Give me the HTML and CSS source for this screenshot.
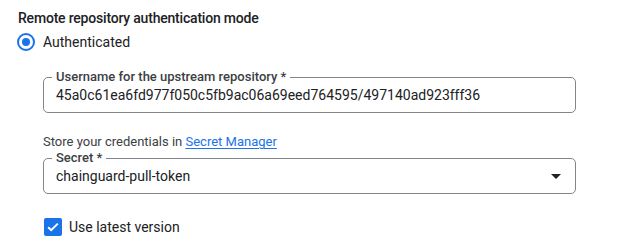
FILE: index.html
```html
<!DOCTYPE html>
<html lang="en">
<head>
  <meta charset="UTF-8">
  <meta name="viewport" content="width=device-width, initial-scale=1.0">
  <title>Remote repository authentication mode</title>
  <link rel="stylesheet" href="styles.css">
</head>
<body>
  <div class="panel">
    <div class="title">Remote repository authentication mode</div>

    <label class="radio-row">
      <span class="radio"><span class="radio-dot"></span></span>
      <span class="radio-label">Authenticated</span>
    </label>

    <div class="auth">
      <fieldset class="field">
        <legend>Username for the upstream repository *</legend>
        <div class="field-value">45a0c61ea6fd977f050c5fb9ac06a69eed764595/497140ad923fff36</div>
      </fieldset>

      <div class="hint">Store your credentials in <a href="#">Secret Manager</a></div>

      <fieldset class="field">
        <legend>Secret *</legend>
        <div class="field-value select">
          <span>chainguard-pull-token</span>
          <svg class="arrow" width="10" height="5" viewBox="0 0 10 5"><path d="M0 0h10L5 5z" fill="#202124"/></svg>
        </div>
      </fieldset>

      <label class="check-row">
        <span class="checkbox">
          <svg width="14" height="14" viewBox="0 0 14 14"><path d="M2.2 7.2l3 3 6.6-6.6" fill="none" stroke="#fff" stroke-width="2"/></svg>
        </span>
        <span class="check-label">Use latest version</span>
      </label>
    </div>
  </div>
</body>
</html>
```

FILE: styles.css
```css
body {
  margin: 0;
  font-family: Roboto, "Liberation Sans", sans-serif;
  color: #202124;
  background: #fff;
}
.panel {
  padding: 8px 42px 0 17px;
}
.title {
  font-size: 14px;
  line-height: 20px;
  font-weight: 500;
  letter-spacing: -0.2px;
  padding-left: 1px;
}
.radio-row {
  display: flex;
  align-items: center;
  height: 24px;
  margin-top: 2px;
}
.radio {
  width: 18px;
  height: 18px;
  box-sizing: border-box;
  border: 2px solid #1a73e8;
  border-radius: 50%;
  display: flex;
  align-items: center;
  justify-content: center;
}
.radio-dot {
  width: 8px;
  height: 8px;
  border-radius: 50%;
  background: #1a73e8;
}
.radio-label {
  font-size: 14px;
  margin-left: 8px;
}
.auth {
  margin-left: 26px;
}
.field {
  margin: 0;
  min-width: 0;
  border: 1px solid #80868b;
  border-radius: 5px;
  padding: 0 14px 7px 12px;
}
.field legend {
  font-size: 13px;
  line-height: 16px;
  font-weight: 500;
  color: #3c4043;
  padding: 0 4px;
  margin-left: -4px;
}
.field-value {
  font-size: 14px;
  line-height: 20px;
}
.select {
  display: flex;
  align-items: center;
  justify-content: space-between;
}
.auth > .field:first-child {
  margin-top: 15px;
}
.hint {
  font-size: 13px;
  line-height: 16px;
  margin-top: 21px;
  color: #3c4043;
}
.hint a {
  color: #1a73e8;
  text-decoration: underline;
  text-underline-offset: 2px;
}
.check-row {
  display: flex;
  align-items: center;
  height: 24px;
  margin-top: 21px;
}
.checkbox {
  width: 18px;
  height: 18px;
  margin-left: 1px;
  border-radius: 2px;
  background: #1a73e8;
  display: flex;
  align-items: center;
  justify-content: center;
}
.check-label {
  font-size: 14px;
  margin-left: 7px;
}
```
